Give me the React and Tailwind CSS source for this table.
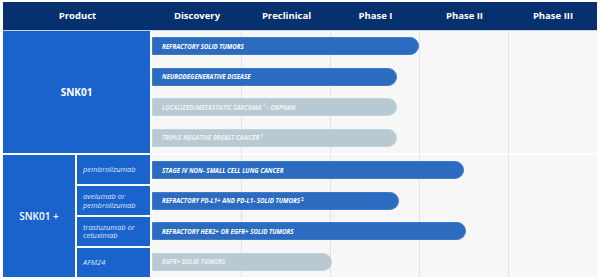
import React from 'react'

const phases = ['Discovery', 'Preclinical', 'Phase I', 'Phase II', 'Phase III'];
const colW = ['w-[90px]', 'w-[89px]', 'w-[89px]', 'w-[89px]', 'w-[88px]'];

const snk01 = [
  { label: 'Refractory solid tumors', w: 267, done: true },
  { label: 'Neurodegenerative disease', w: 245, done: true },
  { label: 'Localized/metastatic sarcoma', sup: '1', tail: ' - orphan', w: 245, done: false },
  { label: 'Triple negative breast cancer', sup: '1', w: 245, done: false },
];

const combos = [
  { drug: ['pembrolizumab'], label: 'Stage IV non- small cell lung cancer', w: 312, done: true },
  { drug: ['avelumab or', 'pembrolizumab'], label: 'Refractory PD-L1+ and PD-L1- solid tumors', sup: '2', w: 247, done: true },
  { drug: ['trastuzumab or', 'cetuximab'], label: 'Refractory HER2+ or EGFR+ solid tumors', w: 314, done: true },
  { drug: ['AFM24'], label: 'EGFR+ solid tumors', w: 180, done: false },
];

function Bar({ item }) {
  return (
    <div className="h-[30.5px] flex items-center">
      <div
        className={
          'h-[18px] rounded-r-full flex items-center pl-[9px] border ' +
          (item.done ? 'bg-[#2b6bc0] border-[#3f7bcb] text-white' : 'bg-[#b8c9d1] border-[#c4d3d9] text-[#eef3f5]')
        }
        style={{ width: item.w }}
      >
        <span className="uppercase italic font-bold text-[6.2px] whitespace-nowrap">
          {item.label}
          {item.sup && <sup className="text-[4.5px] not-italic ml-[1px]">{item.sup}</sup>}
          {item.tail}
        </span>
      </div>
    </div>
  );
}

function Chart({ items }) {
  return (
    <div className="relative w-[445px] h-[122px] bg-[#f7f7f7]">
      <div className="absolute inset-0 flex">
        {phases.map((p, i) => (
          <div key={p} className={colW[i] + ' h-full ' + (i < 4 ? 'border-r border-[#e2e2e2]' : '')} />
        ))}
      </div>
      <div className="relative flex flex-col">
        {items.map((it) => (
          <Bar key={it.label} item={it} />
        ))}
      </div>
    </div>
  );
}

export default function App() {
  return (
    <div className="w-[600px] h-[279px] bg-white pt-[2px] pl-[3px]" style={{ fontFamily: '"Open Sans", "Noto Sans", sans-serif' }}>
      <div className="flex h-[28px] w-[594px] bg-[#07306f] text-white font-bold text-[9.5px]">
        <div className="w-[149px] flex items-center justify-center">Product</div>
        {phases.map((p, i) => (
          <div key={p} className={colW[i] + ' flex items-center justify-center'}>{p}</div>
        ))}
      </div>
      <div className="h-[1px] w-[594px] bg-[#c9d6ea]" />

      <div className="flex gap-[2px]">
        <div className="w-[147px] h-[122px] bg-[#1a63cc] flex items-center justify-center text-white font-bold text-[10px]">
          SNK01
        </div>
        <Chart items={snk01} />
      </div>

      <div className="flex gap-[2px] mt-[2px]">
        <div className="flex gap-[2px] w-[147px] h-[122px]">
          <div className="w-[72px] bg-[#1a63cc] flex items-center justify-center text-white font-semibold text-[10px]">
            SNK01 +
          </div>
          <div className="w-[73px] flex flex-col gap-[1.5px]">
            {combos.map((c) => (
              <div key={c.label} className="flex-1 bg-[#1a63cc] flex flex-col justify-center pl-[6px] text-[#dce8f8] italic text-[7.5px] leading-[8.5px]">
                {c.drug.map((d) => (
                  <span key={d}>{d}</span>
                ))}
              </div>
            ))}
          </div>
        </div>
        <Chart items={combos} />
      </div>
    </div>
  );
}
